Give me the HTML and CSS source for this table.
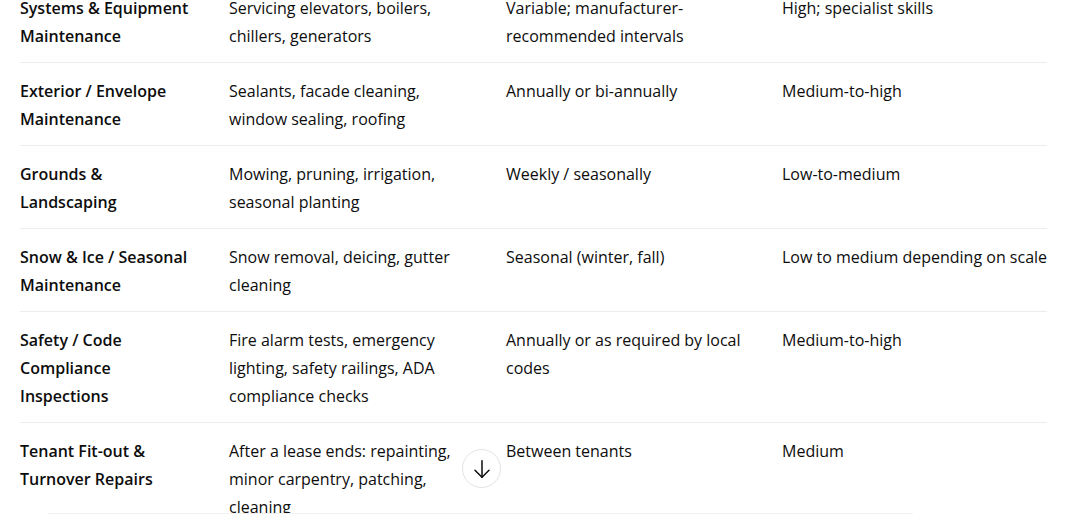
FILE: index.html
```html
<!DOCTYPE html>
<html lang="en">
<head>
<meta charset="utf-8">
<title>Maintenance table</title>
<link rel="stylesheet" href="styles.css">
</head>
<body>
<main class="content">
  <table class="grid">
    <colgroup>
      <col class="c1"><col class="c2"><col class="c3"><col class="c4">
    </colgroup>
    <tbody>
      <tr>
        <td class="name">Systems &amp; Equipment<br>Maintenance</td>
        <td>Servicing elevators, boilers,<br>chillers, generators</td>
        <td>Variable; manufacturer-<br>recommended intervals</td>
        <td>High; specialist skills</td>
      </tr>
      <tr>
        <td class="name">Exterior / Envelope<br>Maintenance</td>
        <td>Sealants, facade cleaning,<br>window sealing, roofing</td>
        <td>Annually or bi-annually</td>
        <td>Medium-to-high</td>
      </tr>
      <tr>
        <td class="name">Grounds &amp;<br>Landscaping</td>
        <td>Mowing, pruning, irrigation,<br>seasonal planting</td>
        <td>Weekly / seasonally</td>
        <td>Low-to-medium</td>
      </tr>
      <tr>
        <td class="name">Snow &amp; Ice / Seasonal<br>Maintenance</td>
        <td>Snow removal, deicing, gutter<br>cleaning</td>
        <td>Seasonal (winter, fall)</td>
        <td>Low to medium depending on scale</td>
      </tr>
      <tr>
        <td class="name">Safety / Code<br>Compliance<br>Inspections</td>
        <td>Fire alarm tests, emergency<br>lighting, safety railings, ADA<br>compliance checks</td>
        <td>Annually or as required by local<br>codes</td>
        <td>Medium-to-high</td>
      </tr>
      <tr class="last">
        <td class="name">Tenant Fit-out &amp;<br>Turnover Repairs</td>
        <td>After a lease ends: repainting,<br>minor carpentry, patching,<br>cleaning</td>
        <td>Between tenants</td>
        <td>Medium</td>
      </tr>
    </tbody>
  </table>
</main>
<button class="scroll-down" type="button" aria-label="Scroll down">
  <svg width="20" height="20" viewBox="0 0 20 20" fill="none" stroke="currentColor" stroke-width="1.5" stroke-linecap="round" stroke-linejoin="round">
    <path d="M10 1.8v16.4"/>
    <path d="M3 11.2 10 18.2l7-7"/>
  </svg>
</button>
<div class="composer-edge"></div>
</body>
</html>
```
FILE: styles.css
```css
html, body {
  margin: 0;
  padding: 0;
  background: #ffffff;
  overflow: hidden;
}
body {
  font-family: "Open Sans", "Noto Sans", "Liberation Sans", sans-serif;
  font-size: 16px;
  color: #0d0d0d;
  height: 514px;
}
.content {
  padding-left: 20px;
}
.grid {
  border-collapse: collapse;
  width: 1027px;
  margin-top: -20px;
  table-layout: fixed;
}
.c1 { width: 209px; }
.c2 { width: 277px; }
.c3 { width: 276px; }
.grid td {
  padding: 14px 0 12px;
  line-height: 28px;
  vertical-align: top;
  white-space: nowrap;
  border-bottom: 1px solid #ececec;
}
.grid tr.last td {
  border-bottom: none;
}
.grid td.name {
  font-weight: 600;
}
.scroll-down {
  position: fixed;
  left: 462px;
  top: 449px;
  width: 39px;
  height: 39px;
  border-radius: 50%;
  border: 1px solid #e3e3e3;
  background: #ffffff;
  color: #0d0d0d;
  display: flex;
  align-items: center;
  justify-content: center;
  padding: 0;
}
.composer-edge {
  position: fixed;
  left: 48px;
  top: 513px;
  width: 865px;
  height: 1px;
  background: #f1f1f1;
}
```
